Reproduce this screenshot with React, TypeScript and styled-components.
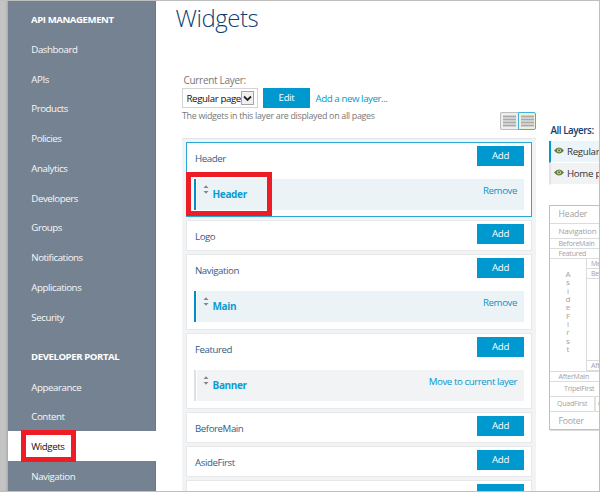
import React from "react";
import styled, { createGlobalStyle } from "styled-components";

const Global = createGlobalStyle`
  * { box-sizing: border-box; }
  body { margin: 0; background: #fff; font-family: "Open Sans", "Noto Sans", sans-serif; }
`;

const blue = "#0099cf";

const Frame = styled.div`
  display: flex;
  width: 600px;
  height: 492px;
  overflow: hidden;
  background: #fff;
  border: solid #bfbfbf;
  border-width: 1px 1px 1px 0;
`;

const Edge = styled.div`
  flex: 0 0 8px;
  background: linear-gradient(90deg, #c3c3c3 0 5px, #b5b5b5 7px, #a4a7ab 8px);
`;

const Sidebar = styled.nav`
  flex: 0 0 148px;
  background: #758291;
  border-right: 1px solid #6a7a8e;
`;

const NavTitle = styled.div<{ $height: number; $top: number }>`
  height: ${(p) => p.$height}px;
  padding: ${(p) => p.$top}px 0 0 23px;
  font-size: 9.6px;
  line-height: 14px;
  font-weight: 700;
  letter-spacing: -0.42px;
  color: #fff;
  white-space: nowrap;
`;

const NavItem = styled.div<{ $active?: boolean }>`
  height: 29.75px;
  margin-right: ${(p) => (p.$active ? -1 : 0)}px;
  padding-left: 23.3px;
  font-size: 9.7px;
  line-height: 32px;
  letter-spacing: -0.43px;
  color: ${(p) => (p.$active ? "#111" : "#f7f8f9")};
  background: ${(p) => (p.$active ? "#fff" : "transparent")};
`;

const Highlight = styled.div<{ $x: number; $y: number; $w: number; $h: number }>`
  position: absolute;
  left: ${(p) => p.$x}px;
  top: ${(p) => p.$y}px;
  width: ${(p) => p.$w}px;
  height: ${(p) => p.$h}px;
  border: 5px solid #ee1c25;
`;

const Main = styled.main`
  flex: 0 0 380px;
  padding-left: 26px;
  display: flex;
  flex-direction: column;
  > * { flex-shrink: 0; }
`;

const Title = styled.h1`
  margin: 0 0 0 -6.5px;
  padding-top: 1px;
  height: 72px;
  font-size: 24px;
  line-height: 31px;
  font-weight: 300;
  letter-spacing: -0.45px;
  color: #123e70;
`;

const FieldLabel = styled.label`
  height: 15px;
  padding-left: 1.5px;
  font-size: 10px;
  line-height: 14px;
  letter-spacing: -0.3px;
  color: #777;
`;

const Controls = styled.div`
  display: flex;
  align-items: center;
  height: 20px;
`;

const Select = styled.div`
  display: flex;
  align-items: center;
  justify-content: space-between;
  width: 76px;
  height: 20px;
  margin-right: 5px;
  padding: 0 3px 0 3.5px;
  border: 1px solid #d4d4d4;
  font-size: 9.7px;
  letter-spacing: -0.38px;
  white-space: nowrap;
  color: #111;
`;

const Arrow = styled.span`
  display: flex;
  flex: 0 0 13px;
  height: 14px;
  align-items: center;
  justify-content: center;
  background: #f0f0f0;
  border: 1px solid #a5a5a5;
`;

const Button = styled.button`
  width: 47px;
  height: 20px;
  margin-left: auto;
  padding: 0;
  border: 0;
  background: ${blue};
  color: #fff;
  font: 9.7px/20px "Open Sans", "Noto Sans", sans-serif;
  letter-spacing: -0.35px;
`;

const EditButton = styled(Button)`
  margin-left: 0;
`;

const Link = styled.a`
  font-size: 9.7px;
  line-height: 14px;
  letter-spacing: -0.42px;
  white-space: nowrap;
  color: ${blue};
`;

const NewLink = styled(Link)`
  margin-left: 5.5px;
  padding-top: 1px;
`;

const InfoRow = styled.div`
  display: flex;
  justify-content: space-between;
  width: 354px;
  height: 30px;
`;

const Hint = styled.span`
  padding-top: 1px;
  font-size: 8.9px;
  line-height: 13px;
  letter-spacing: -0.3px;
  color: #777;
  white-space: nowrap;
`;

const Toggle = styled.div`
  display: flex;
  width: 36px;
  height: 18px;
  margin-top: 4px;
`;

const ToggleHalf = styled.div<{ $active?: boolean }>`
  width: 18px;
  display: flex;
  align-items: center;
  justify-content: center;
  background: ${(p) => (p.$active ? "#edf0d4" : "#eee")};
  border: 1px solid ${(p) => (p.$active ? "#45b1d8" : "#bdbdbd")};
  border-right-width: ${(p) => (p.$active ? 1 : 0)}px;
  border-radius: ${(p) => (p.$active ? "0 2px 2px 0" : "2px 0 0 2px")};
`;

const Panel = styled.section`
  display: flex;
  flex-direction: column;
  gap: 3px;
  width: 354px;
  height: 360px;
  padding: 3px 4px 0;
  background: #f2f3f4;
  border-top: 1px solid #e4e5e6;
`;

const Card = styled.div<{ $current?: boolean; $h: number }>`
  flex: 0 0 ${(p) => p.$h}px;
  padding: 3px 7px 0;
  background: #fff;
  border: 1px solid ${(p) => (p.$current ? "#2ba7d5" : "#e6e8ea")};
`;

const CardHead = styled.div`
  display: flex;
  justify-content: space-between;
  height: 20px;
  font-size: 9.7px;
  line-height: 25px;
  letter-spacing: -0.43px;
  color: #365c86;
  padding-left: 1px;
`;

const Item = styled.div<{ $own?: boolean }>`
  display: flex;
  justify-content: space-between;
  width: 330px;
  height: 31px;
  margin-top: 13px;
  padding: 0 7px 0 7px;
  background: ${(p) => (p.$own ? "#ebf3f7" : "#f2f3f5")};
  border-left: 2px solid ${(p) => (p.$own ? "#008fc5" : "#dfe0e1")};
  box-shadow: inset 1px 0 #fff;
`;

const ItemName = styled.div`
  display: flex;
  gap: 3.5px;
  font-size: 10px;
  line-height: 31px;
  font-weight: 700;
  letter-spacing: -0.34px;
  color: #0d9cd0;
  svg { margin-top: 6px; }
`;

const ItemLink = styled(Link)`
  padding-top: 4.5px;
`;

const Aside = styled.aside`
  flex: 0 0 63px;
  overflow: hidden;
  padding: 122px 0 0 13px;
`;

const AsideTitle = styled.div`
  height: 18px;
  padding-left: 1.5px;
  font-size: 9.8px;
  line-height: 15px;
  font-weight: 600;
  letter-spacing: -0.45px;
  white-space: nowrap;
  color: #143e70;
`;

const Layer = styled.div<{ $active?: boolean }>`
  display: flex;
  align-items: center;
  gap: 3px;
  height: 22px;
  padding-left: 3px;
  border-left: 2px solid ${(p) => (p.$active ? "#0099cf" : "#e2e3e4")};
  border-bottom: 1px solid #fff;
  background: ${(p) => (p.$active ? "#ebf4f8" : "#f1f2f3")};
  font-size: 9.7px;
  line-height: 22px;
  letter-spacing: -0.3px;
  white-space: nowrap;
  color: #333;
  svg { flex: none; margin-top: -2px; }
`;

const Map = styled.div`
  width: 90px;
  height: 225px;
  margin-top: 20px;
  border: 1px solid #c0c0c0;
  color: #a2a2a2;
`;

const Zone = styled.div<{ $h: number; $size: number; $left?: number }>`
  height: ${(p) => p.$h}px;
  padding-left: ${(p) => p.$left ?? 8.5}px;
  border-bottom: 1px solid #dcdcdc;
  font-size: ${(p) => p.$size}px;
  line-height: ${(p) => p.$h - 1}px;
  letter-spacing: -0.2px;
  white-space: nowrap;
`;

const Middle = styled.div`
  display: flex;
  height: 113px;
  border-bottom: 1px solid #dcdcdc;
`;

const Vertical = styled.div`
  flex: 0 0 37px;
  padding-top: 11px;
  border-right: 1px solid #dcdcdc;
  font-size: 8px;
  line-height: 8.35px;
  text-align: center;
`;

const Stack = styled.div`
  flex: 1;
  display: flex;
  flex-direction: column;
`;

const Gap = styled.div`
  flex: 1;
  border-bottom: 1px solid #dcdcdc;
`;

const Quad = styled.div`
  display: flex;
`;

const QuadZone = styled(Zone)<{ $w: number }>`
  flex: 0 0 ${(p) => p.$w}px;
  border-right: 2px solid #e2e2e2;
`;

const Grip = () => (
  <svg width="6" height="9" viewBox="0 0 6 9">
    <path d="M.5 3 3 .3 5.5 3ZM.5 6 3 8.7 5.5 6Z" fill="#858585" />
  </svg>
);

const Eye = () => (
  <svg width="10" height="7" viewBox="0 0 10 7">
    <path d="M0 3.5Q5-2.6 10 3.5Q5 9.6 0 3.5Z" fill="#64793c" />
    <circle cx="5" cy="3.4" r="1.9" fill="#d9e2c4" />
    <circle cx="5" cy="3.4" r="1.1" fill="#64793c" />
  </svg>
);

const Lines = () => (
  <svg width="13" height="12" viewBox="0 0 13 12" shapeRendering="crispEdges">
    <path d="M0 0H13V12H0Z" fill="#d0d0d0" />
    <path d="M0 1.5H13M0 4.5H13M0 7.5H13M0 10.5H13" stroke="#a9a9a9" />
  </svg>
);

const management = ["Dashboard", "APIs", "Products", "Policies", "Analytics", "Developers", "Groups", "Notifications", "Applications", "Security"];
const portal = ["Appearance", "Content", "Widgets", "Navigation"];

type Section = { name: string; h: number; item?: string; link?: string; current?: boolean };
const cards: Section[] = [
  { name: "Header", h: 75, item: "Header", link: "Remove", current: true },
  { name: "Logo", h: 31 },
  { name: "Navigation", h: 76, item: "Main", link: "Remove" },
  { name: "Featured", h: 76, item: "Banner", link: "Move to current layer" },
  { name: "BeforeMain", h: 31 },
  { name: "AsideFirst", h: 31 },
  { name: "", h: 31 },
];

export default function App() {
  return (
    <Frame>
      <Global />
      <Edge />
      <Sidebar>
        <NavTitle $height={32.8} $top={12}>API MANAGEMENT</NavTitle>
        {management.map((n) => <NavItem key={n}>{n}</NavItem>)}
        <NavTitle $height={40.4} $top={19}>DEVELOPER PORTAL</NavTitle>
        {portal.map((n) => <NavItem key={n} $active={n === "Widgets"}>{n}</NavItem>)}
      </Sidebar>
      <Main>
        <Title>Widgets</Title>
        <FieldLabel>Current Layer:</FieldLabel>
        <Controls>
          <Select>
            Regular page
            <Arrow>
              <svg width="9" height="7" viewBox="0 0 9 7"><path d="M1 1.5 4.5 5 8 1.5" fill="none" stroke="#222" strokeWidth="1.8" /></svg>
            </Arrow>
          </Select>
          <EditButton>Edit</EditButton>
          <NewLink>Add a new layer...</NewLink>
        </Controls>
        <InfoRow>
          <Hint>The widgets in this layer are displayed on all pages</Hint>
          <Toggle>
            <ToggleHalf><Lines /></ToggleHalf>
            <ToggleHalf $active><Lines /></ToggleHalf>
          </Toggle>
        </InfoRow>
        <Panel>
          {cards.map((c) => (
            <Card key={c.name} $h={c.h} $current={c.current}>
              <CardHead>{c.name}<Button>{c.name && "Add"}</Button></CardHead>
              {c.item && (
                <Item $own={c.link === "Remove"}>
                  <ItemName><Grip />{c.item}</ItemName>
                  <ItemLink>{c.link}</ItemLink>
                </Item>
              )}
            </Card>
          ))}
        </Panel>
      </Main>
      <Aside>
        <AsideTitle>All Layers:</AsideTitle>
        <Layer $active><Eye />Regular page</Layer>
        <Layer><Eye />Home page</Layer>
        <Map>
          <Zone $h={18} $size={8.7}>Header</Zone>
          <Zone $h={15} $size={8}>Navigation</Zone>
          <Zone $h={10} $size={7}>BeforeMain</Zone>
          <Zone $h={10} $size={7}>Featured</Zone>
          <Middle>
            <Vertical>{"AsideFirst".split("").map((l, i) => <div key={i}>{l}</div>)}</Vertical>
            <Stack>
              <Zone $h={10} $size={7} $left={4}>MenuMain</Zone>
              <Zone $h={10} $size={7} $left={4}>BeforeContent</Zone>
              <Gap />
              <Zone $h={10} $size={7} $left={4}>AfterContent</Zone>
            </Stack>
          </Middle>
          <Zone $h={10} $size={7}>AfterMain</Zone>
          <Zone $h={15} $size={7} $left={14}>TripelFirst</Zone>
          <Quad>
            <QuadZone $w={46} $h={15} $size={7} $left={7}>QuadFirst</QuadZone>
            <Zone $h={15} $size={7} $left={2}>QuadSecond</Zone>
          </Quad>
          <Zone $h={19} $size={8.7}>Footer</Zone>
        </Map>
      </Aside>
      <Highlight $x={21} $y={430} $w={55} $h={32} />
      <Highlight $x={186} $y={172} $w={86} $h={44} />
    </Frame>
  );
}
